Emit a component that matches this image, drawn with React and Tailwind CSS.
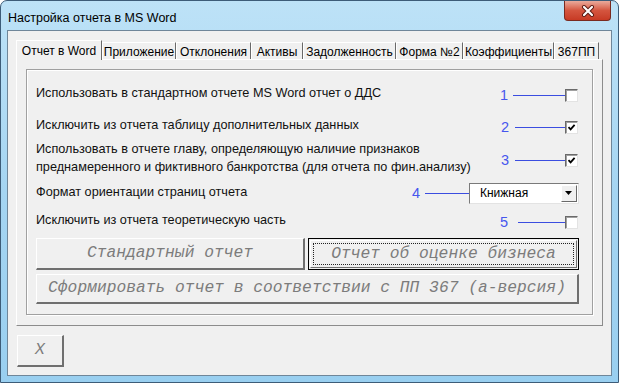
import React from "react";

const tabs = ["Приложение", "Отклонения", "Активы", "Задолженность", "Форма №2", "Коэффициенты", "367ПП"];
const tabWidths = [74, 75, 52, 93, 67, 91, 45];

const Check = ({ checked }) => (
  <div className="w-[13px] h-[13px] bg-white border-t border-l border-t-[#6a6a6a] border-l-[#6a6a6a] border-r border-b border-r-[#e3e3e3] border-b-[#e3e3e3] shadow-[inset_1px_1px_0_#a0a0a0] flex items-center justify-center">
    {checked && (
      <svg width="9" height="9" viewBox="0 0 9 9">
        <path d="M1.5 4.2 L3.6 6.4 L7.6 1.8" fill="none" stroke="#000" strokeWidth="1.8" />
      </svg>
    )}
  </div>
);

const Marker = ({ n, line, gap = 5 }) => (
  <div className="flex items-center">
    <span className="text-[14.5px] leading-none text-[#4656ee]" style={{ marginRight: gap }}>{n}</span>
    <div className="h-px bg-[#3b4de0]" style={{ width: line }}></div>
  </div>
);

const btnText = "font-['Liberation_Mono','Courier_New',monospace] italic text-[16.3px] text-[#7c7c7c] whitespace-nowrap";

export default function App() {
  return (
    <div className="w-[619px] h-[383px] rounded-t-[7px] border border-[#3d5c78] bg-gradient-to-b from-[#bde2f7] via-[#a5d5f2] to-[#99cff0] flex flex-col font-['Liberation_Sans',Arial,sans-serif] overflow-hidden">
      <div className="h-[29px] flex justify-between shrink-0">
        <div className="pl-[7px] pt-[8px] text-[12.5px] text-black">Настройка отчета в MS Word</div>
        <div className="mr-[7px] w-[47px] h-[20px] rounded-b-[4px] border border-t-0 border-[#7a2a20] bg-gradient-to-b from-[#e9aa9c] via-[#d4553f] to-[#c73a24] flex items-center justify-center">
          <svg width="14" height="12" viewBox="0 0 14 12">
            <path d="M3 2 L11 10 M11 2 L3 10" stroke="#5a1a12" strokeWidth="4" strokeLinecap="round" />
            <path d="M3 2 L11 10 M11 2 L3 10" stroke="#ffffff" strokeWidth="2.2" strokeLinecap="round" />
          </svg>
        </div>
      </div>

      <div className="mx-[6px] w-[605px] h-[346px] border border-[#6f8699] bg-[#f0f0f0] flex flex-col pt-[9px]">
        {/* tab strip */}
        <div className="ml-[8px] h-[19px] flex items-end text-[12px] text-black whitespace-nowrap">
          <div className="relative z-10 w-[86px] h-[20px] mb-[-1px] bg-[#f0f0f0] border-t border-l border-white border-r border-r-[#696969] flex items-start justify-center pt-[1px]">
            Отчет в Word
          </div>
          {tabs.map((t, i) => (
            <div
              key={t}
              className="h-[17px] bg-[#f0f0f0] border-t border-l border-white border-r border-r-[#696969] flex items-center justify-center pt-px"
              style={{ width: tabWidths[i] }}
            >
              {t}
            </div>
          ))}
        </div>

        {/* tab panel */}
        <div className="ml-[8px] w-[587px] h-[267px] border-t border-l border-white border-r border-b border-r-[#8c8c8c] border-b-[#8c8c8c] pt-[9px] pl-[9px]">
          <div className="w-[567px] h-[246px] border border-[#a0a0a0] shadow-[inset_1px_1px_0_#ffffff,1px_1px_0_#ffffff] pt-[14px] pl-[9px] pr-[13px] text-[12.7px] text-[#111]">
            <div className="h-[18px] flex items-center justify-between">
              <span className="mt-[2px]">Использовать в стандартном отчете MS Word отчет о ДДС</span>
              <div className="flex items-center mt-[4px]">
                <Marker n="1" line={52} />
                <div className="mr-[1px]"><Check /></div>
              </div>
            </div>

            <div className="h-[18px] mt-[14px] flex items-center justify-between">
              <span className="mt-[1px]">Исключить из отчета таблицу дополнительных данных</span>
              <div className="flex items-center mt-[4px]">
                <Marker n="2" line={50} gap={6} />
                <div className="mr-[1px]"><Check checked /></div>
              </div>
            </div>

            <div className="h-[36px] mt-[6px] flex items-center justify-between">
              <span className="leading-[18px]">
                Использовать в отчете главу, определяющую наличие признаков
                <br />
                преднамеренного и фиктивного банкротства (для отчета по фин.анализу)
              </span>
              <div className="flex items-center mt-[4px]">
                <Marker n="3" line={50} gap={6} />
                <div className="mr-[1px]"><Check checked /></div>
              </div>
            </div>

            <div className="h-[22px] mt-[6px] flex items-center justify-between">
              <span className="mb-[1px]">Формат ориентации страниц отчета</span>
              <div className="flex items-center">
                <Marker n="4" line={44} gap={5} />
                <div className="w-[110px] h-[21px] bg-white border-t border-l border-[#7a7a7a] border-r border-b border-r-[#e3e3e3] border-b-[#e3e3e3] flex items-center justify-between pl-[10px] pr-[1px] text-[12px] text-black">
                  <span>Книжная</span>
                  <div className="w-[16px] h-[17px] bg-[#f0f0f0] border-t border-l border-white border-r border-b border-r-[#696969] border-b-[#696969] flex items-center justify-center">
                    <svg width="8" height="4" viewBox="0 0 8 4">
                      <path d="M0 0 H7 L3.5 4 Z" fill="#000" />
                    </svg>
                  </div>
                </div>
              </div>
            </div>

            <div className="h-[20px] mt-[7px] flex items-center justify-between">
              <span>Исключить из отчета теоретическую часть</span>
              <div className="flex items-center mt-[3px]">
                <Marker n="5" line={47} gap={10} />
                <div className="mr-[1px]"><Check /></div>
              </div>
            </div>

            <div className="h-[32px] mt-[7px] flex gap-[3px]">
              <div className={`w-[269px] h-[32px] border-t border-l border-white border-r-2 border-b-2 border-r-[#6f6f6f] border-b-[#6f6f6f] flex items-center justify-center ${btnText}`}>
                Стандартный отчет
              </div>
              <div className="w-[271px] h-[32px] border border-black p-px">
                <div className="w-full h-full border-t border-l border-white border-r border-b border-r-[#6f6f6f] border-b-[#6f6f6f] p-[2px]">
                  <div className={`w-full h-full border border-dotted border-[#222] flex items-center justify-center ${btnText}`}>
                    Отчет об оценке бизнеса
                  </div>
                </div>
              </div>
            </div>

            <div className={`mt-[4px] w-[543px] h-[30px] border-t border-l border-white border-r-2 border-b-2 border-r-[#6f6f6f] border-b-[#6f6f6f] flex items-center justify-center ${btnText}`}>
              Сформировать отчет в соответствии с ПП 367 (а-версия)
            </div>
          </div>
        </div>

        <div className={`ml-[9px] mt-[9px] w-[47px] h-[32px] border-t border-l border-white border-r-2 border-b-2 border-r-[#6f6f6f] border-b-[#6f6f6f] flex items-center justify-center ${btnText}`}>
          X
        </div>
      </div>
    </div>
  );
}
